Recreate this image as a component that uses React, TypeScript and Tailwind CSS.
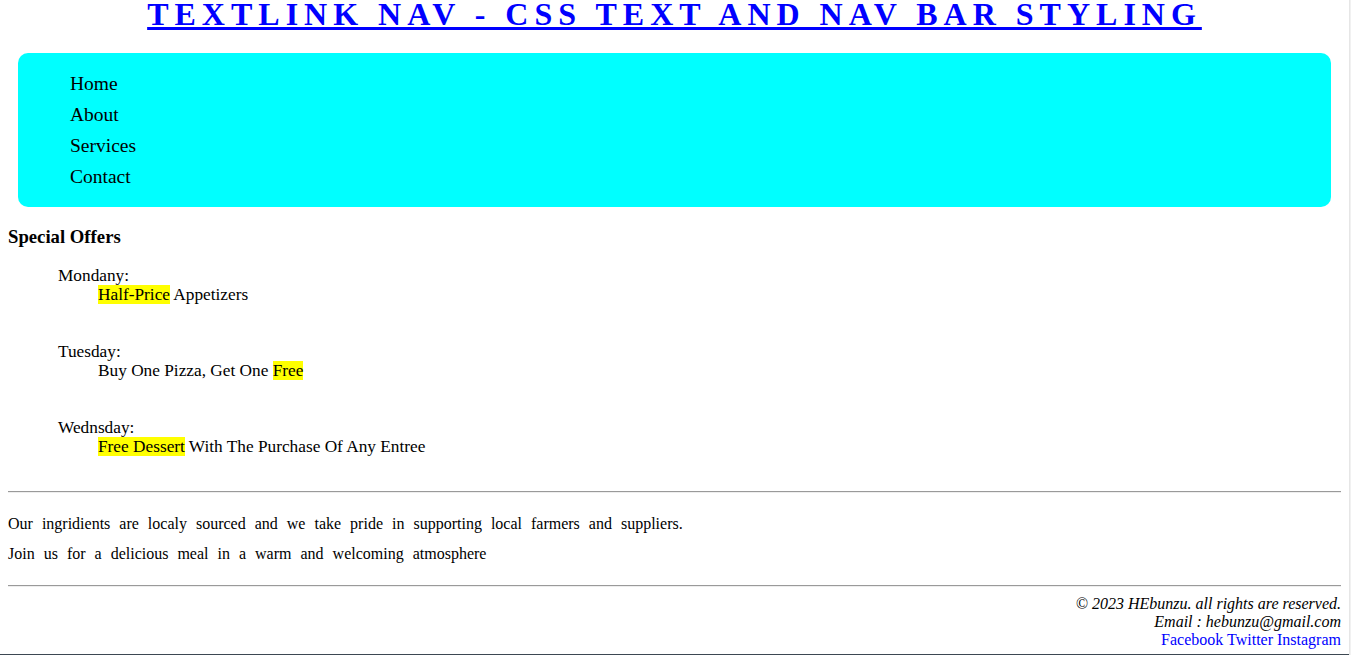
export default function App() {
  const serif = "font-['Liberation_Serif','Times_New_Roman',serif]";
  return (
    <div className={`flex h-[655px] w-full overflow-hidden bg-white text-black ${serif}`}>
      <div className="flex w-[1349px] shrink-0 flex-col">
        <h1 className="text-center text-[32px] font-bold leading-[28px] tracking-[6px]">
          <a href="#" className="text-[#0000ff] underline">
            TEXTLINK NAV - CSS TEXT AND NAV BAR STYLING
          </a>
        </h1>

        <nav className="mx-[18px] mt-[25px] rounded-[10px] bg-[#00ffff] py-[15px] pl-[52px]">
          <ul className="flex flex-col text-[19.5px] leading-[31px]">
            <li><a href="#" className="text-black">Home</a></li>
            <li><a href="#" className="text-black">About</a></li>
            <li><a href="#" className="text-black">Services</a></li>
            <li><a href="#" className="text-black">Contact</a></li>
          </ul>
        </nav>

        <div className="px-[8px]">
          <h3 className="mt-[19px] text-[18.72px] font-bold leading-[22px]">Special Offers</h3>

          <dl className="mt-[18px] ml-[50px] text-[17.3px] leading-[19px]">
            <dt>Mondany:</dt>
            <dd className="mb-[38px] ml-[40px]">
              <span className="bg-[#ffff00]">Half-Price</span> Appetizers
            </dd>
            <dt>Tuesday:</dt>
            <dd className="mb-[38px] ml-[40px]">
              Buy One Pizza, Get One <span className="bg-[#ffff00]">Free</span>
            </dd>
            <dt>Wednsday:</dt>
            <dd className="ml-[40px]">
              <span className="bg-[#ffff00]">Free Dessert</span> With The Purchase Of Any Entree
            </dd>
          </dl>

          <hr className="mt-[35px] h-0 border-t border-b border-t-[#9a9a9a] border-b-[#eeeeee]" />

          <p className="mt-[22px] text-[16px] leading-[18px] [word-spacing:5px]">
            Our ingridients are localy sourced and we take pride in supporting local farmers and suppliers.
          </p>
          <p className="mt-[12px] text-[16px] leading-[18px] [word-spacing:5px]">
            Join us for a delicious meal in a warm and welcoming atmosphere
          </p>

          <hr className="mt-[22px] h-0 border-t border-b border-t-[#9a9a9a] border-b-[#eeeeee]" />

          <footer className="mt-[8px] flex flex-col items-end text-right text-[16px] leading-[18px]">
            <p className="italic">© 2023 HEbunzu. all rights are reserved.</p>
            <p className="italic">Email : hebunzu@gmail.com</p>
            <p>
              <a href="#" className="text-[#0000ff]">Facebook</a>{" "}
              <a href="#" className="text-[#0000ff]">Twitter</a>{" "}
              <a href="#" className="text-[#0000ff]">Instagram</a>
            </p>
          </footer>
        </div>

        <div className="mt-auto h-px w-full bg-[#3d4852]" />
      </div>
      <div className="flex-1 border-l border-[#e6e6e6] bg-[#f1f1f1]" />
    </div>
  );
}
